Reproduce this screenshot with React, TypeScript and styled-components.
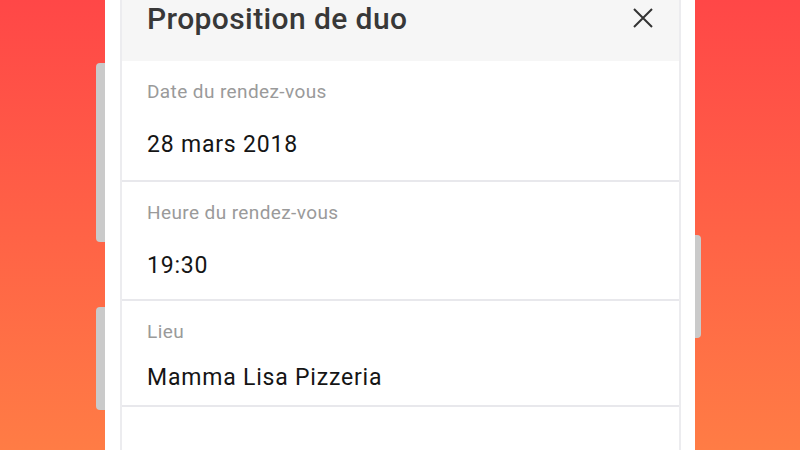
import React from 'react';
import styled, { createGlobalStyle } from 'styled-components';

const GlobalStyle = createGlobalStyle`
  html, body {
    margin: 0;
    padding: 0;
    height: 450px;
    overflow: hidden;
  }
  body {
    font-family: Roboto, 'Noto Sans', sans-serif;
    background: linear-gradient(180deg, #ff4747 0%, #ff7c45 100%);
  }
`;

const details = [
  { label: 'Date du rendez-vous', value: '28 mars 2018', gap: 27, bottom: 21 },
  { label: 'Heure du rendez-vous', value: '19:30', gap: 27, bottom: 19 },
  { label: 'Lieu', value: 'Mamma Lisa Pizzeria', gap: 20, bottom: 13 },
];

export default function App() {
  return (
    <>
      <GlobalStyle />
      <Stage>
        <Rail>
          <SideKey side="left" top={63} length={179} />
          <SideKey side="left" top={65} length={103} />
        </Rail>
        <Phone>
          <Sheet>
            <Header>
              <Title>Proposition de duo</Title>
              <CloseButton aria-label="Fermer">
                <svg width="20" height="20" viewBox="0 0 20 20">
                  <path d="M1 1 L19 19 M19 1 L1 19" stroke="#333" strokeWidth="2" fill="none" />
                </svg>
              </CloseButton>
            </Header>
            {details.map((d) => (
              <Field key={d.label} bottom={d.bottom}>
                <Label>{d.label}</Label>
                <Value gap={d.gap}>{d.value}</Value>
              </Field>
            ))}
            <Field bottom={0} />
          </Sheet>
        </Phone>
        <Rail>
          <SideKey side="right" top={235} length={103} />
        </Rail>
      </Stage>
    </>
  );
}

const Stage = styled.div`
  display: flex;
  align-items: stretch;
  height: 450px;
  padding-left: 96px;
`;

const Rail = styled.div`
  display: flex;
  flex-direction: column;
`;

const SideKey = styled.div<{ side: 'left' | 'right'; top: number; length: number }>`
  width: ${(p) => (p.side === 'left' ? 9 : 6)}px;
  margin-top: ${(p) => p.top}px;
  height: ${(p) => p.length}px;
  background: #cacaca;
  border-radius: ${(p) => (p.side === 'left' ? '4px 0 0 4px' : '0 4px 4px 0')};
`;

const Phone = styled.div`
  width: 590px;
  background: #fff;
  padding: 0 14px 0 15px;
  box-sizing: border-box;
`;

const Sheet = styled.div`
  height: 100%;
  border-left: 2px solid #ececef;
  border-right: 2px solid #ececef;
  background: #fff;
  display: flex;
  flex-direction: column;
`;

const Header = styled.div`
  height: 61px;
  flex: none;
  background: #f6f6f6;
  display: flex;
  justify-content: space-between;
  align-items: flex-start;
  padding: 2px 26px 0 25px;
  box-sizing: border-box;
`;

const Title = styled.h1`
  margin: 0;
  font-size: 30px;
  line-height: 34px;
  font-weight: 500;
  letter-spacing: 0.4px;
  color: #383838;
`;

const CloseButton = styled.button`
  border: 0;
  background: none;
  padding: 0;
  margin-top: 6px;
  width: 20px;
  height: 20px;
  display: flex;
`;

const Field = styled.div<{ bottom: number }>`
  flex: none;
  padding: 19px 25px ${(p) => p.bottom}px;
  border-bottom: 2px solid #e8e8ec;
  &:last-child {
    border-bottom: 0;
    flex: 1;
  }
`;

const Label = styled.div`
  font-size: 19px;
  line-height: 24px;
  letter-spacing: 0.4px;
  color: #9a9a9a;
`;

const Value = styled.div<{ gap: number }>`
  margin-top: ${(p) => p.gap}px;
  font-size: 23px;
  line-height: 28px;
  letter-spacing: 0.8px;
  color: #151515;
`;
